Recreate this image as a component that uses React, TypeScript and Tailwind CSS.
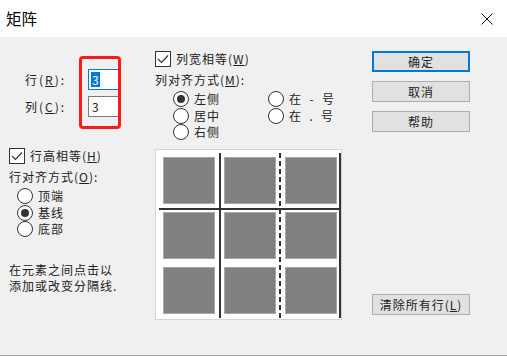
import React from "react";

const font = { fontFamily: '"Noto Sans CJK SC", "Microsoft YaHei", sans-serif' };

function Check({ label, u, rest }: { label: string; u: string; rest?: string }) {
  return (
    <div className="flex items-center h-[16px]">
      <div className="w-[16px] h-[16px] border border-[#333] bg-white flex items-center justify-center shrink-0">
        <svg width="12" height="10" viewBox="0 0 12 10">
          <path d="M1 5 L4.5 8.5 L11 1.5" fill="none" stroke="#333" strokeWidth="1.2" />
        </svg>
      </div>
      <span className="ml-[5px] text-[12px] leading-[16px] tracking-[1px] text-[#222]">
        {label}(<span className="underline">{u}</span>){rest}
      </span>
    </div>
  );
}

function Radio({ label, on }: { label: React.ReactNode; on?: boolean }) {
  return (
    <div className="flex items-center h-[16.5px]">
      <div className="w-[16px] h-[16px] rounded-full border border-[#333] bg-white flex items-center justify-center shrink-0">
        {on && <div className="w-[8px] h-[8px] rounded-full bg-[#333]" />}
      </div>
      <span className="ml-[5px] text-[12px] leading-[16px] tracking-[1px] text-[#222] whitespace-pre">{label}</span>
    </div>
  );
}

function Btn({ children, focus }: { children: React.ReactNode; focus?: boolean }) {
  return (
    <div
      className={
        "w-[98px] h-[21px] flex items-center justify-center text-[12px] tracking-[1px] text-[#222] bg-[#e1e1e1] " +
        (focus ? "border-2 border-[#0078d7]" : "border border-[#adadad]")
      }
    >
      {children}
    </div>
  );
}

function Cell() {
  return <div className="w-[52px] h-[47px] bg-[#808080] border border-[#a8a8a8]" />;
}

export default function App() {
  return (
    <div className="w-[507px] h-[356px] bg-[#f0f0f0] flex flex-col overflow-hidden" style={font}>
      <div className="h-[37px] bg-white flex items-center justify-between pl-[6px] pr-[14px] shrink-0">
        <span className="text-[15.5px] text-black">矩阵</span>
        <svg width="12" height="12" viewBox="0 0 12 12">
          <path d="M0.5 0.5 L11.5 11.5 M11.5 0.5 L0.5 11.5" stroke="#111" strokeWidth="1" />
        </svg>
      </div>
      <div className="flex-1 flex relative border-b border-[#a0a0a0]">
        {/* left column */}
        <div className="w-[155px] pl-[9px] flex flex-col">
          <div className="mt-[32px] ml-[16px] flex items-center h-[21px]">
            <span className="w-[63px] text-[12px] tracking-[2px] text-[#222]">
              行(<span className="underline">R</span>):
            </span>
            <div className="w-[33px] h-[21px] bg-white border border-[#0078d7] flex items-center pl-[2px]">
              <span className="bg-[#0078d7] text-white text-[12px] leading-[15px] px-[1px]">3</span>
            </div>
          </div>
          <div className="mt-[6px] ml-[16px] flex items-center h-[21px]">
            <span className="w-[63px] text-[12px] tracking-[2px] text-[#222]">
              列(<span className="underline">C</span>):
            </span>
            <div className="w-[33px] h-[21px] bg-white border border-[#7a7a7a] flex items-center pl-[3px]">
              <span className="text-[12px] text-[#222]">3</span>
            </div>
          </div>
          <div className="mt-[31px]">
            <Check label="行高相等" u="H" />
          </div>
          <div className="mt-[5px] text-[12px] leading-[16px] tracking-[1px] text-[#222]">
            行对齐方式(<span className="underline">O</span>):
          </div>
          <div className="mt-[3px] ml-[8px] flex flex-col">
            <Radio label="顶端" />
            <Radio label="基线" on />
            <Radio label="底部" />
          </div>
          <div className="mt-[24px] text-[12px] leading-[16px] tracking-[1px] text-[#222]">
            在元素之间点击以
            <br />
            添加或改变分隔线.
          </div>
        </div>
        {/* middle column */}
        <div className="w-[217px] flex flex-col">
          <div className="mt-[14px]">
            <Check label="列宽相等" u="W" />
          </div>
          <div className="mt-[5px] text-[12px] leading-[16px] tracking-[1px] text-[#222]">
            列对齐方式(<span className="underline">M</span>):
          </div>
          <div className="mt-[3px] ml-[18px] flex">
            <div className="flex flex-col w-[95px]">
              <Radio label="左侧" on />
              <Radio label="居中" />
              <Radio label="右侧" />
            </div>
            <div className="flex flex-col">
              <Radio label="在  -  号" />
              <Radio label="在  .  号" />
            </div>
          </div>
          <div className="mt-[8px] w-[187px] h-[171px] bg-white border border-[#d4d4d4] relative pt-[7px] pl-[7px]">
            <div className="grid grid-cols-[52px_52px_52px] gap-x-[9px] grid-rows-[47px_47px_47px] gap-y-[8px]">
              <Cell />
              <Cell />
              <Cell />
              <Cell />
              <Cell />
              <Cell />
              <Cell />
              <Cell />
              <Cell />
            </div>
            <div className="absolute left-[63px] top-[3px] w-[2px] h-[165px] bg-[#333]" />
            <div className="absolute left-[123px] top-[3px] w-[2px] h-[165px] bg-[repeating-linear-gradient(to_bottom,#333_0_5px,transparent_5px_8px)]" />
            <div className="absolute left-[183px] top-[3px] w-[2px] h-[165px] bg-[#333]" />
            <div className="absolute left-[3px] top-[58px] w-[182px] h-[2px] bg-[#333]" />
          </div>
        </div>
        {/* right column */}
        <div className="w-[98px] flex flex-col">
          <div className="mt-[14px] flex flex-col gap-[9px]">
            <Btn focus>确定</Btn>
            <Btn>取消</Btn>
            <Btn>帮助</Btn>
          </div>
          <div className="mt-[162px]">
            <Btn>
              清除所有行(<span className="underline">L</span>)
            </Btn>
          </div>
        </div>
        {/* red annotation */}
        <div className="absolute left-[79px] top-[19px] w-[42px] h-[73px] border-[3px] border-[#ff1a1a] rounded-[4px]" />
      </div>
    </div>
  );
}
